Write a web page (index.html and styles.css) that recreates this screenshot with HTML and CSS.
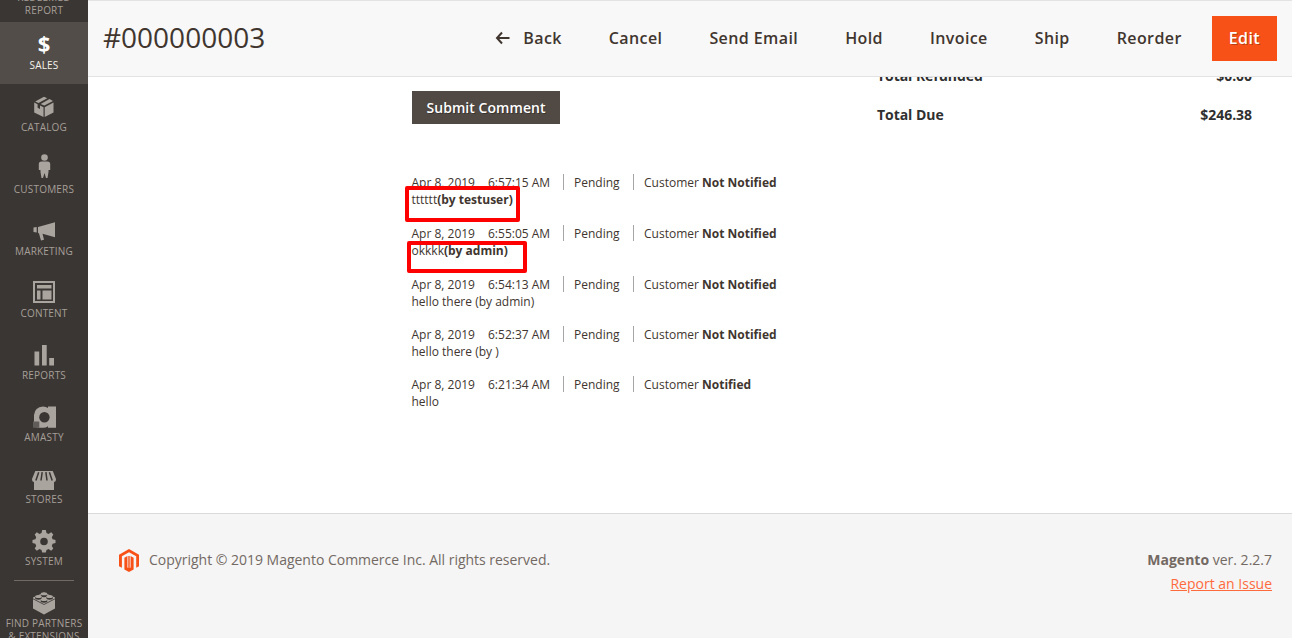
FILE: index.html
```html
<!DOCTYPE html>
<html lang="en">
<head>
<meta charset="utf-8">
<title>#000000003 / Orders / Magento Admin</title>
<link rel="stylesheet" href="styles.css">
</head>
<body>
<div class="admin">
  <nav class="menu">
    <a class="menu-item menu-item-first"><span>Redeemed<br>Report</span></a>
    <a class="menu-item active"><b class="dollar">$</b><span>Sales</span></a>
    <a class="menu-item"><svg viewBox="0 0 24 24"><path d="M12 1.800L15.300 3.300 6.500 8 3.200 6.400zM17.500 4L21 5.900 12.300 10.500 8.700 9zM2.200 7.500L5.600 9.200V12.800L8 14.100V10.500L11.500 12.200V22L2.200 17.500zM21.500 7.500V17.500L12.700 22V12.200z"/></svg><span>Catalog</span></a>
    <a class="menu-item customers"><svg viewBox="0 0 24 24"><circle cx="12.500" cy="3.500" r="3.300"/><path d="M9.500 7.500H15.500Q18.200 7.500 18.200 10V16H16.500V18L15.500 24H14L12.500 19 11 24H9.500L8.500 18V16H6.800V10Q6.800 7.500 9.500 7.500z"/></svg><span>Customers</span></a>
    <a class="menu-item marketing"><svg viewBox="0 0 24 24"><path d="M1.500 7.500L4.700 7.100V12.500L1.500 12zM6 7.100L23 2.300V17.300L10.500 13.800 12 19.700 9 20.500 7 13.500 6 12.800z"/></svg><span>Marketing</span></a>
    <a class="menu-item content-item"><svg viewBox="0 0 24 24"><path fill-rule="evenodd" d="M1 1H23V23H1zM3 3V21H21V3zM5 5H19.500V8.500H5zM5 10.500H8.500V19.500H5zM10.500 10.500H19.500V19.500H10.500z"/></svg><span>Content</span></a>
    <a class="menu-item"><svg viewBox="0 0 24 24"><path d="M2.500 8.500H7.200V22.500H2.500zM10 2H14.700V22.500H10zM17.200 15H22V22.500H17.200z"/></svg><span>Reports</span></a>
    <a class="menu-item"><svg viewBox="0 0 24 24"><path d="M2 17V10Q2.800 2 11 1.500Q14 1.500 16 3V1.500H24V22.800H16V21.300Q14 22.800 11 22.800H5Q2 21 2 17z"/><circle cx="12.400" cy="12.200" r="5.200" class="hole"/><path class="dim" d="M1 16.500H7.300V22.800H1z"/></svg><span>Amasty</span></a>
    <a class="menu-item stores"><svg viewBox="0 0 24 24"><path d="M3.300 3H20.800L24 11Q24 14 22 14V22H2V14Q0 14 0 11z"/><path class="stripe" d="M6.700 4.200L3.900 12.500M10.200 4.200L9 12.500M13.900 4.200L15 12.500M17.400 4.200L20.200 12.500"/></svg><span>Stores</span></a>
    <a class="menu-item"><svg viewBox="0 0 24 24"><path fill-rule="evenodd" d="M10.200 1H13.800L14.500 4 16.500 4.900 19.200 3.300 21.300 5.400 19.800 8.200 20.600 10.300 23.500 11V14L20.600 14.700 19.800 16.900 21.300 19.600 19.200 21.700 16.500 20.100 14.500 21 13.800 23.500H10.200L9.500 21 7.500 20.100 4.800 21.700 2.700 19.600 4.200 16.900 3.400 14.700 .5 14V11L3.400 10.300 4.200 8.200 2.700 5.400 4.800 3.300 7.500 4.900 9.500 4zM12 8.700A3.800 3.800 0 1 0 12 16.300 3.800 3.800 0 1 0 12 8.700z"/></svg><span>System</span></a>
    <a class="menu-item partners"><svg viewBox="0 0 24 24"><path d="M1 6.500L12 1.500 23 6.500V17.500L12 23.500 1 17.500z"/><path class="edge" d="M1 7.800L12 13.500 23 7.800"/><g class="stud"><ellipse cx="12" cy="4.500" rx="3.400" ry="1.700"/><ellipse cx="6.500" cy="7" rx="3.400" ry="1.700"/><ellipse cx="17.500" cy="7" rx="3.400" ry="1.700"/><ellipse cx="12" cy="10" rx="3.400" ry="1.700"/></g><g><ellipse cx="12" cy="2.800" rx="3.200" ry="1.500"/><ellipse cx="6.500" cy="5.500" rx="3.200" ry="1.500"/><ellipse cx="17.500" cy="5.500" rx="3.200" ry="1.500"/><ellipse cx="12" cy="8.500" rx="3.200" ry="1.500"/></g></svg><span>Find Partners<br>&amp; Extensions</span></a>
  </nav>
  <div class="page">
    <header class="page-header">
      <h1>#000000003</h1>
      <div class="actions">
        <a class="back"><svg viewBox="0 0 15 14"><path d="M7 1.500L2 7L7 12.500M2 7H14.500"/></svg><span>Back</span></a>
        <a>Cancel</a><a>Send Email</a><a>Hold</a><a>Invoice</a><a>Ship</a><a>Reorder</a>
        <a class="primary">Edit</a>
      </div>
    </header>
    <main class="content">
      <section class="history">
        <button class="submit">Submit Comment</button>
        <ul class="comments">
          <li class="tall"><div class="meta"><span class="date">Apr 8, 2019</span><span class="time">6:57:15 AM</span><span class="status">Pending</span><span class="customer">Customer <b>Not Notified</b></span></div><div class="note">tttttt<b>(by testuser)</b><i class="mark mark-user"></i></div></li>
          <li class="tall"><div class="meta"><span class="date">Apr 8, 2019</span><span class="time">6:55:05 AM</span><span class="status">Pending</span><span class="customer">Customer <b>Not Notified</b></span></div><div class="note">okkkk<b>(by admin)</b><i class="mark mark-admin"></i></div></li>
          <li><div class="meta"><span class="date">Apr 8, 2019</span><span class="time">6:54:13 AM</span><span class="status">Pending</span><span class="customer">Customer <b>Not Notified</b></span></div><div class="note">hello there (by admin)</div></li>
          <li><div class="meta"><span class="date">Apr 8, 2019</span><span class="time">6:52:37 AM</span><span class="status">Pending</span><span class="customer">Customer <b>Not Notified</b></span></div><div class="note">hello there (by )</div></li>
          <li><div class="meta"><span class="date">Apr 8, 2019</span><span class="time">6:21:34 AM</span><span class="status">Pending</span><span class="customer">Customer <b>Notified</b></span></div><div class="note">hello</div></li>
        </ul>
      </section>
      <section class="totals">
        <div class="total"><span>Total Refunded</span><span>$0.00</span></div>
        <div class="total"><span>Total Due</span><span>$246.38</span></div>
      </section>
    </main>
    <footer class="footer">
      <svg class="logo" viewBox="0 0 20 23"><path d="M10 0L20 5.700V17.200L17.200 18.800V7.300L10 3.200 2.900 7.300V18.800L0 17.200V5.700zM5.400 8.700L8.400 7V18.500L9.300 19V7H10.700V19L11.600 18.500V7L14.600 8.700V20.400L10 23 5.400 20.400z"/></svg>
      <p class="copyright">Copyright © 2019 Magento Commerce Inc. All rights reserved.</p>
      <div class="version"><div><b>Magento</b> ver. 2.2.7</div><a>Report an Issue</a></div>
    </footer>
  </div>
</div>
</body>
</html>
```
FILE: styles.css
```css
* { box-sizing: border-box; }
body { margin: 0; background: #fff; color: #41362f; font-family: "Open Sans", sans-serif; }
.admin { display: flex; height: 638px; overflow: hidden; }

.menu { width: 88px; flex: none; background: #3a3633; overflow: hidden; }
.menu-item { display: flex; flex-direction: column; align-items: center; height: 62px; padding-top: 11px; color: #a69f98; font-size: 10px; line-height: 13px; letter-spacing: .2px; text-align: center; text-transform: uppercase; white-space: nowrap; }
.menu-item svg { width: 24px; height: 24px; margin-bottom: 2px; fill: #aaa49e; }
.menu-item-first { height: 22px; padding: 0; justify-content: flex-end; padding-bottom: 5px; }
.menu-item.active { background: #524d49; color: #f7f3eb; }
.menu-item.customers { padding-top: 8px; }
.customers svg { margin-bottom: 5px; }
.marketing { padding-top: 12px; }
.marketing svg { margin-bottom: 1px; }
.content-item { padding-top: 10px; }
.content-item svg { margin-bottom: 3px; }
.menu-item.stores { padding-top: 12px; }
.stores svg { margin-bottom: 1px; }
.dollar { height: 24px; margin-bottom: 2px; font-size: 22px; line-height: 20px; letter-spacing: 0; color: #fff; }
.menu-item .hole { fill: #3a3633; }
.menu-item .dim { fill: #5f5c5a; }
.stripe { fill: none; stroke: #3a3633; stroke-width: 1.5; }
.edge { fill: none; stroke: #3a3633; stroke-width: .8; }
.stud { fill: #3a3633; }
.partners { position: relative; height: 80px; padding-top: 11px; }
.partners::before { content: ""; position: absolute; top: 0; left: 14px; width: 60px; height: 1px; background: #736963; }

.page { flex: 1; min-width: 0; display: flex; flex-direction: column; }
.page-header { display: flex; align-items: center; justify-content: space-between; height: 77px; flex: none; padding: 0 15px; background: #f8f8f8; border-top: 1px solid #e3e3e3; border-bottom: 1px solid #e3e3e3; }
h1 { margin: 0 0 4px; font-size: 28px; line-height: 38px; font-weight: 400; }
.actions { display: flex; align-items: flex-start; gap: 47px; font-size: 16px; font-weight: 600; letter-spacing: .4px; line-height: 22px; }
.actions a { padding-top: 11px; }
.back { display: flex; align-items: center; gap: 13px; }
.back svg { width: 15px; height: 14px; fill: none; stroke: #41362f; stroke-width: 2; }
.primary { margin-left: -17px; padding: 11px 17px 12px; background: #f75118; color: #fff; text-shadow: 1px 1px 0 rgba(0,0,0,.25); }

.content { display: flex; height: 436px; flex: none; padding: 0 40px 0 324px; justify-content: space-between; overflow: hidden; }
.history { padding-top: 14px; }
.submit { display: block; width: 148px; height: 33px; padding: 0; border: 0; background: #514943; color: #fff; font: 600 14px/33px "Open Sans", sans-serif; letter-spacing: .05px; text-shadow: 1px 1px 0 rgba(0,0,0,.3); }
.comments { margin: 50px 0 0 -.5px; padding: 0; list-style: none; font-size: 12px; line-height: 17px; white-space: nowrap; }
.comments li { height: 50px; }
.comments .tall { height: 51px; }
.meta { display: flex; align-items: center; height: 17px; }
.date { width: 76.5px; }
.time { width: 75px; }
.status { width: 70px; }
.status, .customer { border-left: 1px solid #a6a6a6; padding-left: 10px; height: 16px; line-height: 17px; margin-top: -1px; }
.note { position: relative; }
.mark { position: absolute; border: 4px solid #f00; border-radius: 2px; }
.mark-user { left: -6.5px; top: -5px; width: 115px; height: 36px; }
.mark-admin { left: -4.5px; top: -1px; width: 120px; height: 32px; }

.totals { width: 375px; color: #303030; font-size: 14px; font-weight: 700; line-height: 19px; letter-spacing: -.05px; margin-top: -11px; }
.total { display: flex; justify-content: space-between; height: 39px; }

.footer { display: flex; flex: 1; align-items: flex-start; padding: 34px 20px 0 31px; background: #f5f5f5; border-top: 1px solid #dadada; color: #736963; font-size: 14px; line-height: 24px; }
.logo { width: 20px; height: 23px; margin-top: 1px; fill: #f75118; }
.copyright { margin: 0 0 0 10px; flex: 1; letter-spacing: -.015px; }
.version { text-align: right; }
.version a { color: #ff6a3d; text-decoration: underline; }
```
